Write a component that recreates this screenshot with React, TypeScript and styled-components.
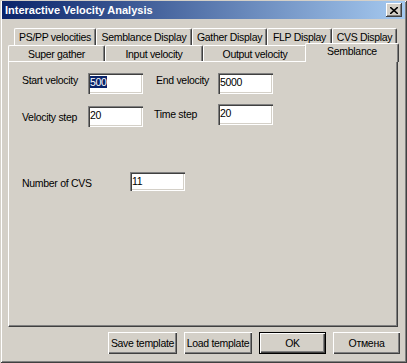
import React from 'react';
import styled, { createGlobalStyle } from 'styled-components';

const GlobalStyle = createGlobalStyle`
  html, body {
    margin: 0;
    padding: 0;
    background: #d4d0c8;
  }
  * {
    box-sizing: border-box;
  }
`;

const FONT = `'Liberation Sans', Arial, sans-serif`;

const Window = styled.div`
  width: 407px;
  height: 363px;
  padding: 1px 2px;
  background: #d4d0c8;
  box-shadow: inset 1px 1px #d4d0c8, inset -1px -1px #404040,
    inset 2px 2px #ffffff, inset -2px -2px #808080;
  font-family: ${FONT};
  font-size: 10.5px;
  letter-spacing: -0.3px;
  color: #000;
  display: flex;
  flex-direction: column;
`;

const TitleBar = styled.div`
  height: 18px;
  display: flex;
  align-items: center;
  justify-content: space-between;
  padding: 0 3px 0 3px;
  background: linear-gradient(to right, #0a246a 0%, #a6caf0 100%);
`;

const Title = styled.span`
  color: #fff;
  font-weight: bold;
  font-size: 11px;
  letter-spacing: 0;
`;

const CloseButton = styled.div`
  width: 16px;
  height: 14px;
  display: flex;
  align-items: center;
  justify-content: center;
  background: #d4d0c8;
  box-shadow: inset -1px -1px #404040, inset 1px 1px #ffffff,
    inset -2px -2px #808080;
`;

const Body = styled.div`
  display: flex;
  flex-direction: column;
  padding: 9px 0 0 6px;
`;

const TabRow = styled.div<{ $indent: number; $height: number }>`
  display: flex;
  height: ${({ $height }) => $height}px;
  margin-left: ${({ $indent }) => $indent}px;
`;

const Tab = styled.div<{ $width: number; $active?: boolean }>`
  position: relative;
  flex: none;
  width: ${({ $width }) => $width}px;
  display: flex;
  align-items: center;
  justify-content: center;
  background: #d4d0c8;
  border-top: 1px solid #ffffff;
  border-left: 1px solid #ffffff;
  border-right: 1px solid #404040;
  border-radius: 2px 2px 0 0;
  box-shadow: inset -1px 0 #808080;
  white-space: nowrap;
  ${({ $active }) =>
    $active &&
    `
    margin: -2px -1px -1px -2px;
    z-index: 1;
    padding-bottom: 4px;
  `}
`;

const Panel = styled.div`
  width: 390px;
  height: 266px;
  background: #d4d0c8;
  border-top: 1px solid #ffffff;
  border-left: 1px solid #ffffff;
  border-right: 1px solid #404040;
  border-bottom: 1px solid #404040;
  box-shadow: inset -1px -1px #808080;
  padding: 11px 0 0 13px;
`;

const FieldGrid = styled.div`
  display: grid;
  grid-template-columns: 66px 55px 75px 55px;
  grid-auto-rows: 21px;
  row-gap: 12px;
`;

const Label = styled.div<{ $dy?: number; $dx?: number }>`
  line-height: 13px;
  margin-top: ${({ $dy }) => $dy ?? 2}px;
  padding-left: ${({ $dx }) => $dx ?? 0}px;
  white-space: nowrap;
`;

const Field = styled.div<{ $dy?: number; $h?: number }>`
  width: 55px;
  height: ${({ $h }) => $h ?? 21}px;
  margin-top: ${({ $dy }) => $dy ?? 0}px;
  background: #ffffff;
  padding: 3px 0 0 2px;
  line-height: 13px;
  box-shadow: inset 1px 1px #808080, inset 2px 2px #404040,
    inset -1px -1px #ffffff, inset -2px -2px #d4d0c8;
`;

const Selected = styled.span`
  background: #0a246a;
  color: #ffffff;
`;

const CvsRow = styled.div`
  display: flex;
  align-items: flex-start;
  margin-top: 45px;
`;

const CvsLabel = styled(Label)`
  width: 108px;
  margin-top: 5px;
`;

const ButtonRow = styled.div`
  display: flex;
  justify-content: flex-end;
  gap: 7px;
  margin-top: 5px;
  padding-right: 5px;
`;

const Button = styled.div<{ $width: number; $default?: boolean }>`
  width: ${({ $width }) => $width}px;
  height: 22px;
  display: flex;
  align-items: center;
  justify-content: center;
  background: #d4d0c8;
  white-space: nowrap;
  box-shadow: ${({ $default }) =>
    $default
      ? 'inset 1px 1px #000, inset -1px -1px #000, inset 2px 2px #ffffff, inset -2px -2px #404040, inset -3px -3px #808080'
      : 'inset 1px 1px #ffffff, inset -1px -1px #404040, inset -2px -2px #808080'};
`;

const backTabs = [
  { label: 'PS/PP velocities', width: 82 },
  { label: 'Semblance Display', width: 96 },
  { label: 'Gather Display', width: 75 },
  { label: 'FLP Display', width: 65 },
  { label: 'CVS Display', width: 65 },
];

const frontTabs = [
  { label: 'Super gather', width: 97 },
  { label: 'Input velocity', width: 98 },
  { label: 'Output velocity', width: 104 },
  { label: 'Semblance', width: 94, active: true },
];

export default function App() {
  return (
    <>
      <GlobalStyle />
      <Window>
        <TitleBar>
          <Title>Interactive Velocity Analysis</Title>
          <CloseButton>
            <svg width="8" height="7" viewBox="0 0 8 7">
              <path d="M0 0 L8 7 M8 0 L0 7" stroke="#000" strokeWidth="1.6" />
            </svg>
          </CloseButton>
        </TitleBar>
        <Body>
          <TabRow $indent={6} $height={17}>
            {backTabs.map((t) => (
              <Tab key={t.label} $width={t.width}>
                {t.label}
              </Tab>
            ))}
          </TabRow>
          <TabRow $indent={0} $height={16}>
            {frontTabs.map((t) => (
              <Tab key={t.label} $width={t.width} $active={t.active}>
                {t.label}
              </Tab>
            ))}
          </TabRow>
          <Panel>
            <FieldGrid>
              <Label $dy={1}>Start velocity</Label>
              <Field>
                <Selected>500</Selected>
              </Field>
              <Label $dy={1} $dx={13}>End velocity</Label>
              <Field>5000</Field>
              <Label $dy={5}>Velocity step</Label>
              <Field>20</Field>
              <Label $dy={2} $dx={11}>Time step</Label>
              <Field $dy={-2}>20</Field>
            </FieldGrid>
            <CvsRow>
              <CvsLabel>Number of CVS</CvsLabel>
              <Field $h={19}>11</Field>
            </CvsRow>
          </Panel>
          <ButtonRow>
            <Button $width={69}>Save template</Button>
            <Button $width={68}>Load template</Button>
            <Button $width={67} $default>
              OK
            </Button>
            <Button $width={67}>Отмена</Button>
          </ButtonRow>
        </Body>
      </Window>
    </>
  );
}
